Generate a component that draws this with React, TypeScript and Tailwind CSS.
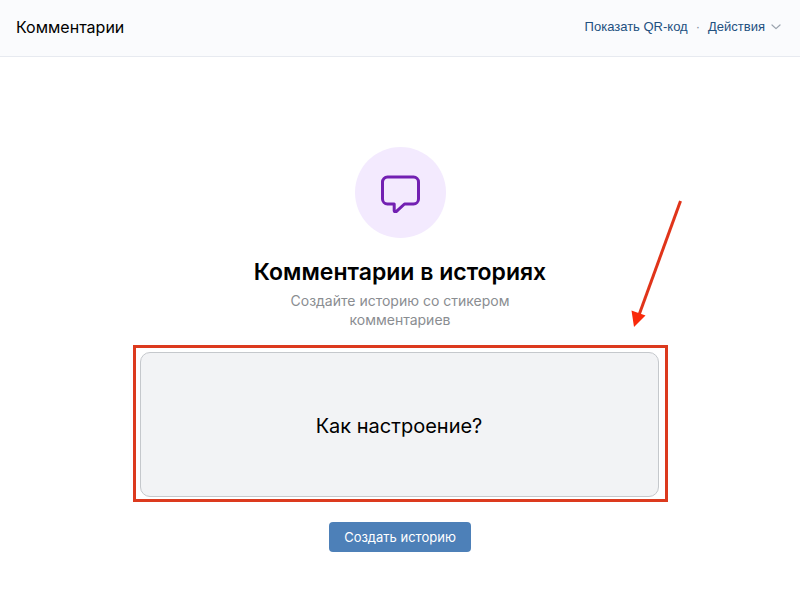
import { useState } from 'react';

function Header() {
  return (
    <header className="flex h-[57px] items-center justify-between border-b border-[#e7eaf0] bg-[#fafbfd] pr-[19px] pl-4 pb-[2px]">
      <h1 className="text-base text-black">Комментарии</h1>
      <nav className="flex items-center font-['Liberation_Sans',sans-serif] text-[13px] text-[#22507f]">
        <a href="#qr">Показать QR-код</a>
        <span className="mx-2 text-[#818c99]">·</span>
        <button type="button" className="flex items-center gap-[6px]">
          Действия
          <svg viewBox="0 0 10 6" className="h-[6px] w-[10px]" fill="none" stroke="#99a2ad">
            <path d="M1 1l4 3.6L9 1" strokeWidth="1.2" strokeLinecap="round" strokeLinejoin="round" />
          </svg>
        </button>
      </nav>
    </header>
  );
}

function CommentIcon() {
  return (
    <div className="flex size-[91px] items-center justify-center rounded-full bg-[#f3eafe]">
      <svg viewBox="0 -1 40 40" className="size-10" fill="none" stroke="#7220b2">
        <path
          d="M7.5 3H33.500a5 5 0 0 1 5 5V25a5 5 0 0 1-5 5H24.500L16.200 37.600a1.200 1.200 0 0 1-2-.9V30H7.500a5 5 0 0 1-5-5V8a5 5 0 0 1 5-5Z"
          strokeWidth="3"
          strokeLinejoin="round"
        />
      </svg>
    </div>
  );
}

function Arrow() {
  return (
    <svg viewBox="0 0 64 136" className="absolute -right-6 bottom-full mb-4 h-[136px] w-16">
      <path d="M55.500 5L14 119" stroke="#e0341a" strokeWidth="3" fill="none" />
      <path d="M9 131L6.500 114.500L20.500 119.500Z" fill="#f92a0a" />
    </svg>
  );
}

export default function App() {
  const [question, setQuestion] = useState('Как настроение?');

  return (
    <div className="min-h-screen bg-white font-[Inter,sans-serif] text-black">
      <Header />
      <main className="flex flex-col items-center px-4 pt-[90px] pb-10">
        <CommentIcon />
        <h2 className="mt-[18px] text-center text-[23px] leading-8 font-semibold">
          Комментарии в историях
        </h2>
        <p className="mt-[3px] w-full max-w-[260px] text-center text-sm leading-[19px] text-[#8a8d91]">
          Создайте историю со стикером комментариев
        </p>
        <div className="relative mt-4 w-full max-w-[535px] border-3 border-[#dc3a1e] pt-1 pr-[6px] pb-[2px] pl-1">
          <Arrow />
          <input
            type="text"
            aria-label="Вопрос"
            value={question}
            onChange={(e) => setQuestion(e.target.value)}
            className="block h-[145px] w-full rounded-[10px] border border-[#c5c8cc] bg-[#f2f3f5] px-4 pt-[2px] text-center text-xl outline-none"
          />
        </div>
        <button
          type="button"
          className="mt-5 h-[30px] rounded bg-[#4d80b8] px-[15px] pt-px text-[13px] text-white"
        >
          Создать историю
        </button>
      </main>
    </div>
  );
}
